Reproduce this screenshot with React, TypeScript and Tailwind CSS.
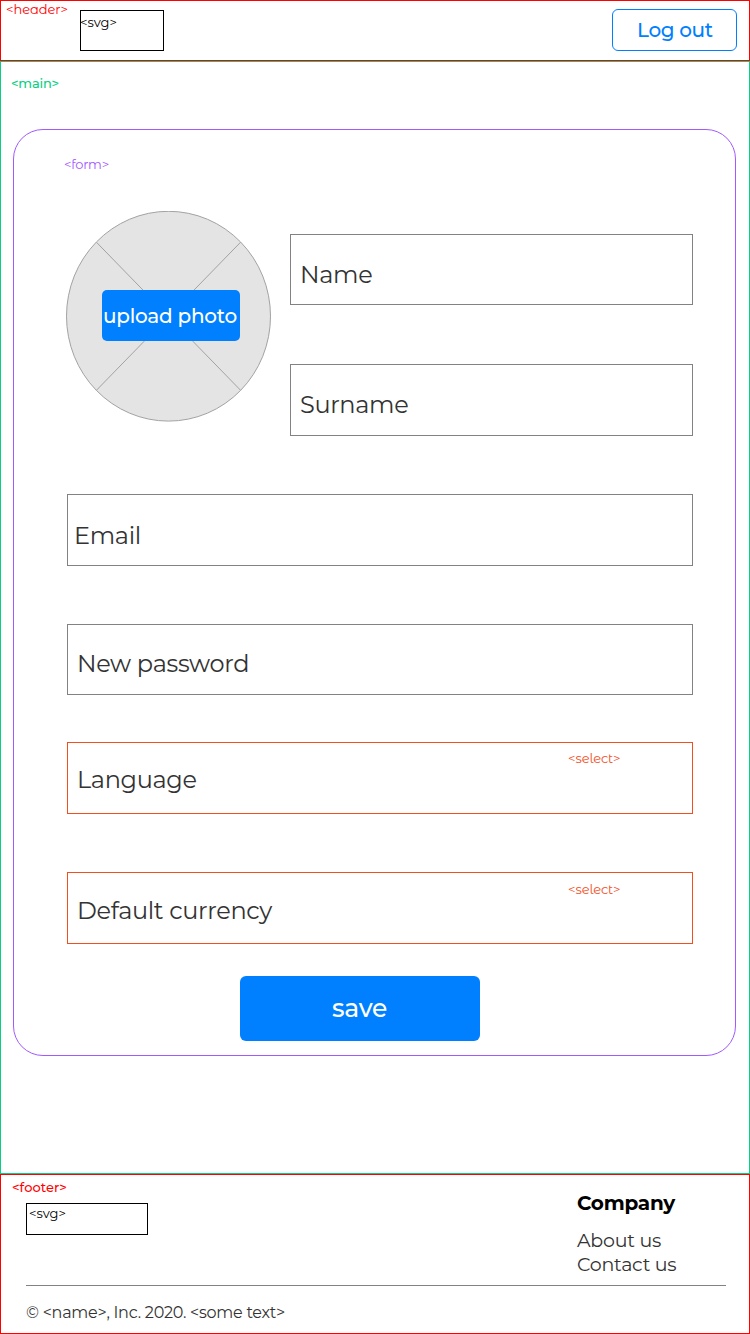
import type { ReactNode } from "react";

function Tag({ className, children }: { className: string; children: ReactNode }) {
  return (
    <span
      className={`block whitespace-nowrap text-[13px] leading-4 ${className}`}
    >
      {children}
    </span>
  );
}

function Field({ label, className }: { label: string; className: string }) {
  return (
    <label className={`block border border-[#828282] ${className}`}>
      <span className="block whitespace-nowrap text-[24px] leading-8 tracking-[-0.33px] text-[#333]">
        {label}
      </span>
    </label>
  );
}

function SelectField({
  label,
  className,
  tagClass,
}: {
  label: string;
  className: string;
  tagClass: string;
}) {
  return (
    <label className={`flex h-[72px] border border-[#f24e1e] pl-[9px] ${className}`}>
      <span className="block w-[491px] whitespace-nowrap text-[24px] leading-8 tracking-[-0.33px] text-[#333]">
        {label}
      </span>
      <Tag className={`font-['Montserrat_Alternates','Montserrat',sans-serif] tracking-[-0.1px] text-[#f24e1e] ${tagClass}`}>
        {"<select>"}
      </Tag>
    </label>
  );
}

function Avatar() {
  return (
    <div className="grid h-[211px] w-[205px] shrink-0">
      <svg className="col-start-1 row-start-1" width="205" height="211" viewBox="0 0 205 211" fill="none">
        <ellipse cx="102.5" cy="105.2" rx="102" ry="104.9" fill="#e4e4e4" stroke="#a2a2a2" />
        <path d="M30.5 31.3L174.5 179.2M174.5 31.3L30.5 179.2" stroke="#a2a2a2" />
      </svg>
      <button
        type="button"
        className="relative col-start-1 row-start-1 mt-[79px] ml-9 h-[51px] w-[138px] rounded-[5px] bg-[#007fff] pl-px text-left text-[20px] leading-[50px] font-medium tracking-[-0.25px] whitespace-nowrap text-white"
      >
        upload photo
      </button>
    </div>
  );
}

export default function App() {
  return (
    <div className="flex h-[1334px] w-[750px] flex-col bg-white font-['Montserrat','Inter',sans-serif]">
      <header className="flex h-[61px] items-start border border-[#ff0000] pl-[5px]">
        <Tag className="w-[74px] font-['Montserrat_Alternates','Montserrat',sans-serif] tracking-[-0.05px] text-[#ff0000]">
          {"<header>"}
        </Tag>
        <div className="mt-[9px] h-[41px] w-[84px] border border-black pt-[3px]">
          <Tag className="-ml-px font-['Montserrat_Alternates','Montserrat',sans-serif] text-black">{"<svg>"}</Tag>
        </div>
        <button
          type="button"
          className="mt-2 ml-auto mr-3 h-[42px] w-[125px] rounded-[6px] border border-[#007fff] pl-6 text-left text-[20px] leading-[40px] font-medium tracking-[-0.35px] whitespace-nowrap text-[#007fff]"
        >
          Log out
        </button>
      </header>

      <main className="h-[1113px] border border-[#0acf83] pt-[13px] pl-3">
        <Tag className="-ml-0.5 font-medium tracking-[-0.2px] text-[#0acf83]">{"<main>"}</Tag>
        <form className="mt-[38px] h-[927px] w-[723px] rounded-[30px] border border-[#a259ff] pt-[26px] pl-[53px]">
          <Tag className="-ml-[3px] font-['Montserrat_Alternates','Montserrat',sans-serif] tracking-[-0.2px] text-[#a259ff]">
            {"<form>"}
          </Tag>
          <div className="mt-[39px] -ml-px flex gap-[19px]">
            <Avatar />
            <div className="flex flex-col pt-[23px]">
              <Field label="Name" className="h-[71px] w-[403px] pt-6 pl-[9px]" />
              <Field label="Surname" className="mt-[59px] h-[72px] w-[403px] pt-6 pl-[9px]" />
            </div>
          </div>
          <Field label="Email" className="mt-[58px] h-[72px] w-[626px] pt-[25px] pl-[6px]" />
          <Field label="New password" className="mt-[58px] h-[71px] w-[626px] pt-[23px] pl-[9px]" />
          <SelectField label="Language" className="mt-[47px] w-[626px] pt-[21px]" tagClass="-mt-[14px]" />
          <SelectField label="Default currency" className="mt-[58px] w-[626px] pt-[22px]" tagClass="-mt-[14px]" />
          <button
            type="button"
            className="mt-8 ml-[173px] block h-[65px] w-[240px] rounded-[6px] bg-[#007fff] pl-[92px] text-left text-[25px] leading-[63px] font-medium tracking-[-0.25px] whitespace-nowrap text-white"
          >
            save
          </button>
        </form>
      </main>

      <footer className="h-[160px] border border-[#ff0000] pl-[25px]">
        <div className="flex h-[110px]">
          <div className="w-[551px] pt-1">
            <Tag className="-ml-[14px] font-medium tracking-[0.05px] text-[#ff0000]">{"<footer>"}</Tag>
            <div className="mt-2 h-8 w-[122px] border border-black pt-[1px] pl-[2px]">
              <Tag className="font-['Montserrat_Alternates','Montserrat',sans-serif] text-black">{"<svg>"}</Tag>
            </div>
          </div>
          <nav className="pt-3">
            <h2 className="text-[20px] leading-8 font-bold tracking-[-0.25px] text-black">Company</h2>
            <ul className="mt-[10px] text-[19px] leading-6 tracking-[-0.25px] text-[#333]">
              <li>About us</li>
              <li>Contact us</li>
            </ul>
          </nav>
        </div>
        <hr className="w-[700px] border-t border-[#828282]" />
        <p className="mt-[17px] text-[16px] leading-5 tracking-[-0.25px] whitespace-nowrap text-[#333]">
          {"© <name>, Inc. 2020. <some text>"}
        </p>
      </footer>
    </div>
  );
}
